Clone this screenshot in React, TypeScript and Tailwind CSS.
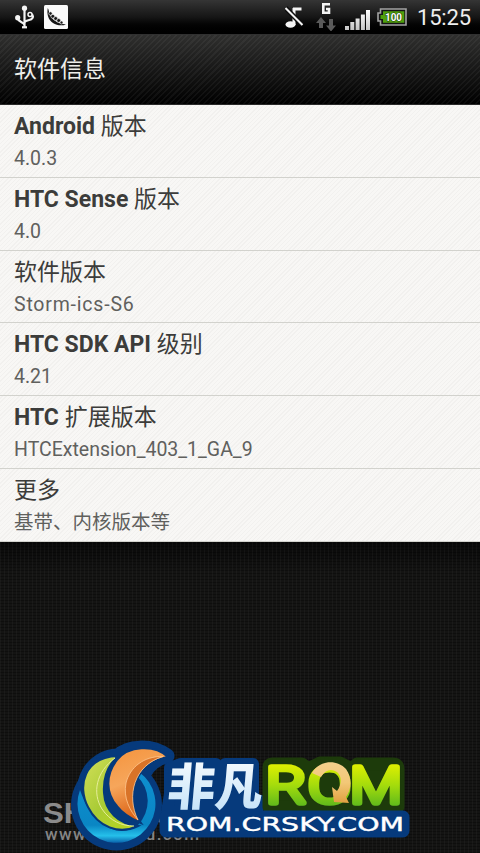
import { FC } from 'react'
import clsx from 'clsx'

const infoRows = [
  { latin: 'Android', label: '版本', value: '4.0.3' },
  { latin: 'HTC Sense', label: '版本', value: '4.0' },
  { latin: '', label: '软件版本', value: 'Storm-ics-S6', wide: true },
  { latin: 'HTC SDK API', label: '级别', value: '4.21' },
  { latin: 'HTC', label: '扩展版本', value: 'HTCExtension_403_1_GA_9' },
  { latin: '', label: '更多', value: '基带、内核版本等' },
]

const UsbIcon: FC = () => (
  <svg
    className="h-[26px] w-5"
    viewBox="0 0 20 26"
    fill="none"
    stroke="#f4f4f4"
    strokeWidth="2.200"
  >
    <path d="M9.500 4v18M9.500 20c-.5-3-5.500-2.500-7-6.500M9.500 17.500c1-3 6.500-1.500 8-4.500 .8-1.500 .2-3-1.500-4" />
    <circle cx="9.500" cy="3.200" r="2.600" fill="#f4f4f4" stroke="none" />
    <circle cx="2.700" cy="12.700" r="2.600" fill="#f4f4f4" stroke="none" />
    <circle cx="15" cy="9.500" r="2" fill="#111" strokeWidth="1.500" />
    <path d="M7 22.300h5" strokeWidth="2.200" />
  </svg>
)

const PeaPodIcon: FC = () => (
  <svg className="size-6" viewBox="0 0 24 24">
    <rect width="24" height="24" rx="1.500" fill="#fafafa" />
    <path
      d="M3.800 3C5 5 4.800 7.500 6 10c2.500 5 7.500 8.800 16 9.500-4 1.500-9.500 1-13-1.500C4.500 15 2.500 9.500 3.800 3Z"
      fill="#171717"
    />
    <g fill="#171717" stroke="#fafafa" strokeWidth=".6">
      <circle cx="6.500" cy="8.500" r="1.700" />
      <circle cx="8.800" cy="11.300" r="1.900" />
      <circle cx="11.700" cy="13.500" r="1.900" />
      <circle cx="14.700" cy="15.500" r="1.900" />
      <circle cx="17.500" cy="17.500" r="1.500" />
    </g>
  </svg>
)

const SilentIcon: FC = () => (
  <svg className="h-[23px] w-[19px]" viewBox="0 0 19 23" fill="none">
    <path d="M9 2v17M8 3h8.500" stroke="#f4f4f4" strokeWidth="3" />
    <ellipse cx="5.500" cy="18.500" rx="5" ry="3.300" fill="#f4f4f4" />
    <path d="M.5 2 17.500 19" stroke="#0d0d0d" strokeWidth="5" />
    <path d="M.5 2 17.500 19" stroke="#f4f4f4" strokeWidth="2" />
  </svg>
)

const NetworkIcon: FC = () => (
  <svg className="h-[30px] w-5" viewBox="0 0 20 30">
    <path
      d="M14 3.200H7.300v8.600H13V8h-3"
      fill="none"
      stroke="#f4f4f4"
      strokeWidth="2.600"
    />
    <path
      d="M5 16 0 22h3v5h4v-5h3ZM15 30.500l5-6h-3V18h-4v6.500h-3Z"
      fill="#5a5a5a"
    />
  </svg>
)

const SignalIcon: FC = () => (
  <svg className="h-5 w-[25px]" viewBox="0 0 25 20">
    <defs>
      <linearGradient id="signal" x1="0" y1="0" x2="0" y2="1">
        <stop stopColor="#fff" />
        <stop offset="1" stopColor="#c4c4c4" />
      </linearGradient>
    </defs>
    <path
      d="M0 16h4v4H0ZM5.300 12h4v8h-4ZM10.600 8.500h4V20h-4ZM15.900 4.500h4V20h-4ZM21 0h4v20h-4Z"
      fill="url(#signal)"
    />
  </svg>
)

const BatteryIcon: FC = () => (
  <svg className="h-[18px] w-[30px]" viewBox="0 0 30 18">
    <path
      d="M3.500 1H29v16H3.500v-4H1V5h2.500Z"
      fill="#151515"
      stroke="#a3a3a3"
      strokeWidth="1.600"
    />
    <path d="M6 3.200h21.300v11.600H6V11H3.500V7H6Z" fill="#4fa00c" />
    <text
      x="8"
      y="13"
      fontFamily="Roboto, sans-serif"
      fontWeight="700"
      fontSize="11"
      textLength="17"
      lengthAdjust="spacingAndGlyphs"
      fill="#fff"
      stroke="#1d3d08"
      strokeWidth="1.200"
      paintOrder="stroke"
    >
      100
    </text>
  </svg>
)

const StatusBar: FC = () => (
  <div className="flex h-[34px] items-start bg-linear-to-b from-[#353535] via-[#161616] to-black">
    <div className="flex gap-[9px] pt-[5px] pl-[15px]">
      <UsbIcon />
      <PeaPodIcon />
    </div>
    <div className="ml-auto flex pr-[9px]">
      <div className="pt-[6px]">
        <SilentIcon />
      </div>
      <div className="ml-[12px] pt-[1px]">
        <NetworkIcon />
      </div>
      <div className="ml-[9px] pt-[10px]">
        <SignalIcon />
      </div>
      <div className="ml-[7px] pt-[8px]">
        <BatteryIcon />
      </div>
      <svg className="ml-[10px] h-[34px] w-[54px]" viewBox="0 0 54 34">
        <text
          x="0"
          y="25"
          fontFamily="Roboto, sans-serif"
          fontSize="22"
          textLength="54"
          fill="#efefef"
        >
          15:25
        </text>
      </svg>
    </div>
  </div>
)

const BrandLogo: FC = () => (
  <svg className="block h-[123px] w-full" viewBox="0 730 480 123">
    <defs>
      <linearGradient id="leaf" x1="0" y1="0" x2="1" y2="1">
        <stop stopColor="#d3e05a" />
        <stop offset=".5" stopColor="#a9cb35" />
        <stop offset="1" stopColor="#b9d81c" />
      </linearGradient>
      <linearGradient id="flame" x1="0" y1="0" x2="0.300" y2="1">
        <stop stopColor="#f5933c" />
        <stop offset=".5" stopColor="#f6a65b" />
        <stop offset="1" stopColor="#d95d10" />
      </linearGradient>
      <linearGradient id="ring" x1="0" y1="0" x2="0" y2="1">
        <stop stopColor="#0e8fd0" />
        <stop offset=".75" stopColor="#0a86c4" />
        <stop offset=".9" stopColor="#25c0ea" />
        <stop offset="1" stopColor="#0a63ac" />
      </linearGradient>
      <linearGradient id="ice" x1="0" y1="0" x2="0" y2="1">
        <stop stopColor="#fff" />
        <stop offset="1" stopColor="#bfe0f8" />
      </linearGradient>
      <linearGradient
        id="lime"
        gradientUnits="userSpaceOnUse"
        x1="0"
        y1="763"
        x2="0"
        y2="807"
      >
        <stop stopColor="#e2f000" />
        <stop offset=".5" stopColor="#a5dc0c" />
        <stop offset="1" stopColor="#5cb81c" />
      </linearGradient>
      <linearGradient id="gold" x1="0" y1="0" x2="0" y2="1">
        <stop stopColor="#f3cf8c" />
        <stop offset=".5" stopColor="#f3c877" />
        <stop offset="1" stopColor="#e0a040" />
      </linearGradient>
    </defs>

    {/* faded site name below the badge */}
    <text
      x="43"
      y="823"
      fontFamily="Liberation Sans, sans-serif"
      fontWeight="700"
      fontSize="29"
      textLength="132"
      lengthAdjust="spacingAndGlyphs"
      fill="#8b8b8b"
    >
      SHENDU
    </text>
    <text
      x="45"
      y="840"
      fontFamily="Roboto, sans-serif"
      fontWeight="500"
      fontSize="17"
      textLength="154"
      fill="#858585"
    >
      www.shendu.com
    </text>

    {/* badge outline */}
    <g fill="#063a7c" stroke="#063a7c" strokeLinejoin="round">
      <circle cx="116.500" cy="805" r="45.500" stroke="none" />
      <path
        d="M118 756C90 757 78 785 88 806C98 827 120 835 137 827L139 822L148 800C132 785 146 760 167 756C150 744 128 747 118 756Z"
        strokeWidth="15"
      />
      <path
        d="M181 764H216V774H225V764H253V800L261 801 256 812H167L170 794V768Z"
        strokeWidth="12"
      />
    </g>
    <path
      d="M269 767Q269 764 272 764H302L308 769 320 763H340L352 769 357 764H393Q398 764 398 769V807H269Z"
      fill="#1d3b0b"
      stroke="#1d3b0b"
      strokeWidth="13"
      strokeLinejoin="round"
    />
    <path
      d="M166 817H403V831H166Z"
      fill="#063a7c"
      stroke="#063a7c"
      strokeWidth="13"
      strokeLinejoin="round"
    />

    {/* swirl */}
    <path
      d="M80 790A39 39 0 1 0 139 772L137 776A34.500 34.500 0 0 1 138 825C122 839 93 829 80 790Z"
      fill="url(#ring)"
    />
    <path
      d="M118 756C84 757 77 786 88 807C98 827 119 835 138 826C118 824 105 811 104 793C103 778 108 765 118 756Z"
      fill="url(#leaf)"
      stroke="#063a7c"
      strokeWidth="2"
    />
    <path
      d="M115 758C96 772 92 793 102 809C110 821 122 826 134 826"
      fill="none"
      stroke="#e6ed9a"
      strokeWidth="1"
    />
    <path
      d="M168 757C154 744 128 746 117 760C105 775 106 794 117 806C123 814 132 819 141 823C124 798 134 763 168 757Z"
      fill="url(#flame)"
      stroke="#063a7c"
      strokeWidth="2"
    />
    <path
      d="M163 756.500C144 756 130 767 126 783C123 798 130 811 138 820C126 796 134 765 163 756.500Z"
      fill="#d97328"
      stroke="#ffc890"
      strokeWidth=".8"
    />

    <g transform="translate(168 807) skewX(-5)">
      <text
        x="-2"
        y="-2"
        fontFamily="Noto Sans CJK SC, sans-serif"
        fontWeight="900"
        fontSize="50"
        textLength="95"
        lengthAdjust="spacingAndGlyphs"
        fill="url(#ice)"
      >
        非凡
      </text>
    </g>
    <g
      fontFamily="Roboto, sans-serif"
      fontWeight="300"
      fontSize="50"
      fill="url(#lime)"
      stroke="url(#lime)"
      strokeWidth="5.500"
      strokeLinejoin="round"
    >
      <text x="266" y="803" textLength="40" lengthAdjust="spacingAndGlyphs">
        R
      </text>
      <text x="308" y="803" textLength="43" lengthAdjust="spacingAndGlyphs">
        O
      </text>
      <text x="350" y="803" textLength="52" lengthAdjust="spacingAndGlyphs">
        M
      </text>
    </g>
    <path
      d="M312 773C319 760 337 759 346 769C353 779 351 790 346 797L349 803L334 802L332 787L337 791C342 784 342 776 337 772C331 768 325 770 321 777Z"
      fill="url(#gold)"
    />
    <text
      x="166"
      y="831"
      fontFamily="DejaVu Sans, sans-serif"
      fontSize="19"
      textLength="238"
      lengthAdjust="spacingAndGlyphs"
      fill="#fff"
      stroke="#fff"
      strokeWidth=".4"
    >
      ROM.CRSKY.COM
    </text>
  </svg>
)

const App: FC = () => {
  return (
    <div className="flex h-[853px] w-[480px] flex-col overflow-hidden bg-[#10100f] font-['Roboto','Noto_Sans_CJK_SC',sans-serif]">
      <StatusBar />
      <header className="flex h-[71px] items-center border-t border-b border-t-[#303030] border-b-[#292929] bg-[repeating-linear-gradient(135deg,rgba(255,255,255,0.045)_0_1.500px,transparent_1.500px_4px),linear-gradient(#2f2f2e,#000)] pl-[14px]">
        <h1 className="text-[23px] leading-none text-[#eeeeea]">软件信息</h1>
      </header>
      <main className="bg-[#f8f7f5] bg-[repeating-linear-gradient(135deg,rgba(70,65,60,0.035)_0_1px,transparent_1px_3px)]">
        {infoRows.map(({ latin, label, value, wide }) => (
          <div
            key={value}
            className="flex h-[72.800px] flex-col border-b border-[#d2d2cd] pl-[14px]"
          >
            <div className="mt-[7px] h-[30px] text-[23px] leading-[30px] text-[#3c3c3a]">
              {latin && <span className="font-bold">{latin} </span>}
              {label}
            </div>
            <div
              className={clsx(
                'mt-[5px] text-[19.500px] leading-[24px] text-[#60605d]',
                wide && 'tracking-[0.800px]'
              )}
            >
              {value}
            </div>
          </div>
        ))}
      </main>
      <footer className="flex flex-1 flex-col justify-end bg-[repeating-linear-gradient(90deg,rgba(255,255,255,0.03)_0_1px,transparent_1px_4px),repeating-linear-gradient(0deg,rgba(0,0,0,0.3)_0_1px,transparent_1px_3px),linear-gradient(#080808,#141413_30px)]">
        <BrandLogo />
      </footer>
    </div>
  )
}

export default App
